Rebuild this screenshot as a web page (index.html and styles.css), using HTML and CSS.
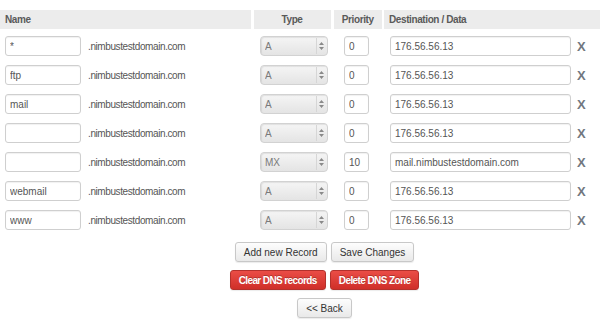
FILE: index.html
```html
<!DOCTYPE html>
<html lang="en">
<head>
<meta charset="UTF-8">
<title>DNS Records</title>
<link rel="stylesheet" href="styles.css">
</head>
<body>

<table class="records">
  <thead>
    <tr>
      <th class="col-name">Name</th>
      <th class="col-type">Type</th>
      <th class="col-prio">Priority</th>
      <th class="col-dest">Destination / Data</th>
    </tr>
  </thead>
  <tbody>
    <tr>
      <td class="col-name"><input type="text" class="host" value="*"><span class="domain">.nimbustestdomain.com</span></td>
      <td class="col-type"><div class="select"><select disabled><option>A</option></select><svg class="arrows" width="7" height="10" viewBox="0 0 7 10"><path d="M1 4L3.5 1L6 4Z M1 6L3.5 9L6 6Z" fill="#8a8a8a"/></svg></div></td>
      <td class="col-prio"><input type="text" class="prio" value="0"></td>
      <td class="col-dest"><input type="text" class="dest" value="176.56.56.13"><span class="remove">X</span></td>
    </tr>
    <tr>
      <td class="col-name"><input type="text" class="host" value="ftp"><span class="domain">.nimbustestdomain.com</span></td>
      <td class="col-type"><div class="select"><select disabled><option>A</option></select><svg class="arrows" width="7" height="10" viewBox="0 0 7 10"><path d="M1 4L3.5 1L6 4Z M1 6L3.5 9L6 6Z" fill="#8a8a8a"/></svg></div></td>
      <td class="col-prio"><input type="text" class="prio" value="0"></td>
      <td class="col-dest"><input type="text" class="dest" value="176.56.56.13"><span class="remove">X</span></td>
    </tr>
    <tr>
      <td class="col-name"><input type="text" class="host" value="mail"><span class="domain">.nimbustestdomain.com</span></td>
      <td class="col-type"><div class="select"><select disabled><option>A</option></select><svg class="arrows" width="7" height="10" viewBox="0 0 7 10"><path d="M1 4L3.5 1L6 4Z M1 6L3.5 9L6 6Z" fill="#8a8a8a"/></svg></div></td>
      <td class="col-prio"><input type="text" class="prio" value="0"></td>
      <td class="col-dest"><input type="text" class="dest" value="176.56.56.13"><span class="remove">X</span></td>
    </tr>
    <tr>
      <td class="col-name"><input type="text" class="host" value=""><span class="domain">.nimbustestdomain.com</span></td>
      <td class="col-type"><div class="select"><select disabled><option>A</option></select><svg class="arrows" width="7" height="10" viewBox="0 0 7 10"><path d="M1 4L3.5 1L6 4Z M1 6L3.5 9L6 6Z" fill="#8a8a8a"/></svg></div></td>
      <td class="col-prio"><input type="text" class="prio" value="0"></td>
      <td class="col-dest"><input type="text" class="dest" value="176.56.56.13"><span class="remove">X</span></td>
    </tr>
    <tr>
      <td class="col-name"><input type="text" class="host" value=""><span class="domain">.nimbustestdomain.com</span></td>
      <td class="col-type"><div class="select"><select disabled><option>MX</option></select><svg class="arrows" width="7" height="10" viewBox="0 0 7 10"><path d="M1 4L3.5 1L6 4Z M1 6L3.5 9L6 6Z" fill="#8a8a8a"/></svg></div></td>
      <td class="col-prio"><input type="text" class="prio" value="10"></td>
      <td class="col-dest"><input type="text" class="dest" value="mail.nimbustestdomain.com"><span class="remove">X</span></td>
    </tr>
    <tr>
      <td class="col-name"><input type="text" class="host" value="webmail"><span class="domain">.nimbustestdomain.com</span></td>
      <td class="col-type"><div class="select"><select disabled><option>A</option></select><svg class="arrows" width="7" height="10" viewBox="0 0 7 10"><path d="M1 4L3.5 1L6 4Z M1 6L3.5 9L6 6Z" fill="#8a8a8a"/></svg></div></td>
      <td class="col-prio"><input type="text" class="prio" value="0"></td>
      <td class="col-dest"><input type="text" class="dest" value="176.56.56.13"><span class="remove">X</span></td>
    </tr>
    <tr>
      <td class="col-name"><input type="text" class="host" value="www"><span class="domain">.nimbustestdomain.com</span></td>
      <td class="col-type"><div class="select"><select disabled><option>A</option></select><svg class="arrows" width="7" height="10" viewBox="0 0 7 10"><path d="M1 4L3.5 1L6 4Z M1 6L3.5 9L6 6Z" fill="#8a8a8a"/></svg></div></td>
      <td class="col-prio"><input type="text" class="prio" value="0"></td>
      <td class="col-dest"><input type="text" class="dest" value="176.56.56.13"><span class="remove">X</span></td>
    </tr>
  </tbody>
</table>

<div class="actions">
  <div class="btn-row">
    <button type="button" class="btn">Add new Record</button>
    <button type="button" class="btn">Save Changes</button>
  </div>
  <div class="btn-row">
    <button type="button" class="btn btn-danger">Clear DNS records</button>
    <button type="button" class="btn btn-danger">Delete DNS Zone</button>
  </div>
  <div class="btn-row">
    <button type="button" class="btn">&lt;&lt; Back</button>
  </div>
</div>

</body>
</html>
```

FILE: styles.css
```css
body {
  font-family: "Liberation Sans", Arial, sans-serif;
  font-size: 10px;
  color: #555;
  background-color: #fff;
  margin: 0;
  padding: 10px 0 0 0;
}

.records {
  width: 600px;
  border-collapse: collapse;
  table-layout: fixed;
}

.records th {
  background-color: #ececec;
  color: #5a5a5a;
  font-weight: bold;
  letter-spacing: -0.4px;
  height: 19px;
  padding: 0 5px;
  box-sizing: border-box;
  border-left: 3px solid #fff;
}

.records th.col-name {
  border-left: none;
  text-align: left;
  width: 252px;
}

.records th.col-type {
  text-align: center;
  width: 80px;
}

.records th.col-prio {
  text-align: center;
  width: 51px;
}

.records th.col-dest {
  text-align: left;
  border-left-width: 2px;
}

.records td {
  padding: 7px 0 2px 5px;
  height: 20px;
  vertical-align: top;
  white-space: nowrap;
}

.records td.col-type {
  padding-left: 8px;
}

.records td.col-prio {
  padding-left: 12px;
}

.records td.col-dest {
  padding-left: 7px;
}

input[type="text"] {
  font-family: "Liberation Sans", Arial, sans-serif;
  font-size: 10px;
  color: #555;
  height: 20px;
  padding: 0 4px;
  margin: 0;
  border: 1px solid #cfcfcf;
  border-radius: 3px;
  box-shadow: inset 0 1px 1px rgba(0, 0, 0, 0.06);
  box-sizing: border-box;
  vertical-align: middle;
}

.host {
  width: 76px;
}

.domain {
  margin-left: 7px;
  letter-spacing: -0.4px;
  vertical-align: middle;
}

.prio {
  width: 25px;
}

.dest {
  width: 181px;
}

.remove {
  display: inline-block;
  margin-left: 6px;
  font-size: 13px;
  font-weight: bold;
  color: #717780;
  vertical-align: middle;
}

.select {
  position: relative;
  display: inline-block;
  width: 68px;
  height: 20px;
}

.select select {
  appearance: none;
  -webkit-appearance: none;
  width: 68px;
  height: 20px;
  margin: 0;
  padding: 0 4px;
  font-family: "Liberation Sans", Arial, sans-serif;
  font-size: 10px;
  color: #7a7a7a;
  border: 1px solid #d2d2d2;
  border-radius: 4px;
  background: linear-gradient(#f5f5f5, #e4e4e4);
  box-shadow: inset 1px 1px 1px rgba(0, 0, 0, 0.08);
  opacity: 1;
}

.select::after {
  content: "";
  position: absolute;
  top: 2px;
  bottom: 2px;
  right: 11px;
  border-left: 1px solid #d6d6d6;
}

.arrows {
  position: absolute;
  right: 3px;
  top: 5px;
}

.actions {
  margin: 10px 0 0 49px;
}

.btn-row {
  display: flex;
  justify-content: center;
  gap: 4px;
  margin-bottom: 8px;
}

.btn {
  font-family: "Liberation Sans", Arial, sans-serif;
  font-size: 10px;
  color: #333;
  height: 20px;
  padding: 0 8px;
  border: 1px solid #c8c8c8;
  border-radius: 3px;
  background: linear-gradient(#fdfdfd, #e9e9e9);
  box-shadow: 0 1px 1px rgba(0, 0, 0, 0.08);
  cursor: pointer;
}

.btn-danger {
  color: #fff;
  font-weight: bold;
  letter-spacing: -0.6px;
  border-color: #b3312c;
  background: linear-gradient(#ea4d46, #cf2f29);
  text-shadow: 0 -1px 0 rgba(0, 0, 0, 0.25);
}
```
